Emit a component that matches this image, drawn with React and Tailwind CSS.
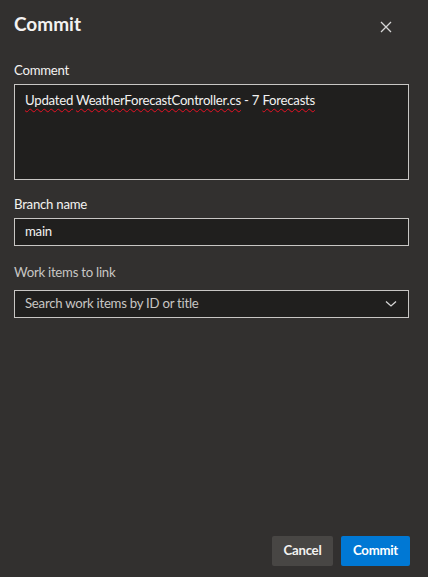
import React from "react";

const font = { fontFamily: "'Lato', 'Noto Sans', sans-serif" };

function CloseIcon() {
  return (
    <svg width="12" height="12" viewBox="0 0 12 12" className="text-[#d6d6d6]">
      <path d="M1 1 L11 11 M11 1 L1 11" stroke="currentColor" strokeWidth="1.3" fill="none" />
    </svg>
  );
}

function Chevron() {
  return (
    <svg width="12" height="8" viewBox="0 0 12 8" className="text-[#d6d6d6]">
      <path d="M1 1.5 L6 6 L11 1.5" stroke="currentColor" strokeWidth="1.3" fill="none" />
    </svg>
  );
}

function Squiggle({ children }) {
  return (
    <span className="underline decoration-wavy decoration-[#e81123] decoration-1 underline-offset-[3px]">
      {children}
    </span>
  );
}

export default function App() {
  return (
    <div
      className="w-[428px] h-[577px] bg-[#32302f] text-[#f3f2f1] flex flex-col pl-[14px] pr-[19px] text-[13.2px] tracking-[-0.25px]"
      style={font}
    >
      <div className="flex items-start justify-between pt-[10px]">
        <h1 className="text-[19px] font-bold leading-[28px] tracking-normal">Commit</h1>
        <button className="mt-[11px] mr-[17px]">
          <CloseIcon />
        </button>
      </div>

      <label className="mt-[22px] leading-[20px]">Comment</label>
      <div className="mt-[4px] h-[96px] border border-[#c8c6c4] bg-[#201f1e] px-[10px] pt-[5px] leading-[20px]">
        <Squiggle>Updated</Squiggle> <Squiggle>WeatherForecastController.cs</Squiggle> - 7{" "}
        <Squiggle>Forecasts</Squiggle>
      </div>

      <label className="mt-[14px] leading-[20px]">Branch name</label>
      <div className="mt-[4px] h-[28px] border border-[#c8c6c4] bg-[#201f1e] px-[10px] flex items-center">
        main
      </div>

      <label className="mt-[16px] leading-[20px] text-[#c8c6c4]">Work items to link</label>
      <div className="mt-[8px] h-[28px] border border-[#c8c6c4] bg-[#201f1e] pl-[10px] pr-[11px] flex items-center justify-between text-[#c8c6c4]">
        <span>Search work items by ID or title</span>
        <Chevron />
      </div>

      <div className="mt-auto mb-[11px] flex justify-end gap-[8px] -mr-[1px]">
        <button className="h-[30px] w-[61px] rounded-[2px] bg-[#484644] font-bold text-[#f3f2f1]">
          Cancel
        </button>
        <button className="h-[30px] w-[69px] rounded-[2px] bg-[#0078d4] font-bold text-white">
          Commit
        </button>
      </div>
    </div>
  );
}
